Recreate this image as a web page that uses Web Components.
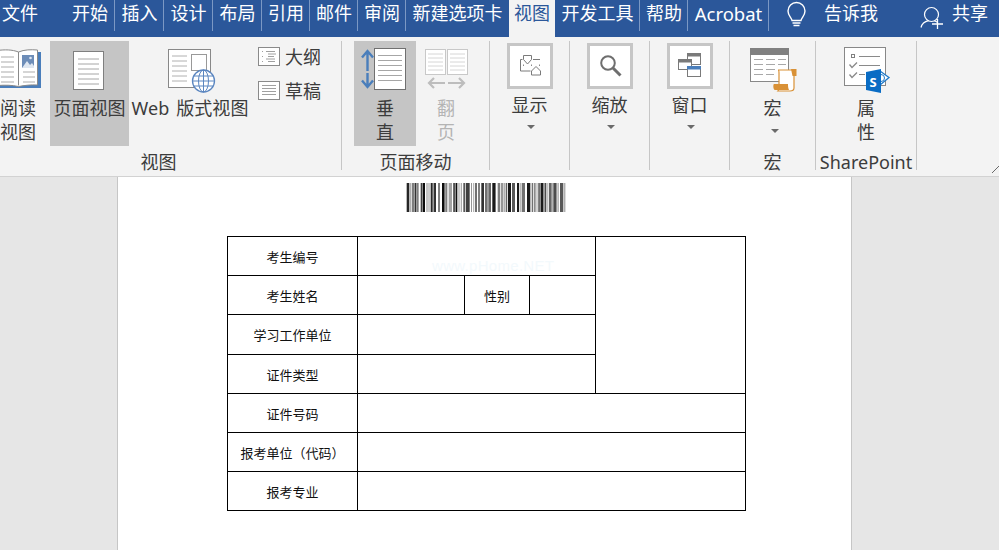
<!DOCTYPE html>
<html lang="zh"><head><meta charset="utf-8"><title>Word</title>
<style>
html,body{margin:0;padding:0;height:100%;overflow:hidden}
body{font-family:"Noto Sans","Noto Sans CJK SC",sans-serif;color:#3c3c3c}
</style></head><body>
<word-window>
  <tab-bar>
    <tab-item w="66" pad="2" plain>文件</tab-item>
    <tab-item w="49" pad="6">开始</tab-item>
    <tab-item w="49" center>插入</tab-item>
    <tab-item w="49" center>设计</tab-item>
    <tab-item w="49" center>布局</tab-item>
    <tab-item w="48" center>引用</tab-item>
    <tab-item w="48" center>邮件</tab-item>
    <tab-item w="48" center>审阅</tab-item>
    <tab-item w="103" center plain>新建选项卡</tab-item>
    <tab-item w="46" center active plain>视图</tab-item>
    <tab-item w="85" center>开发工具</tab-item>
    <tab-item w="48" center>帮助</tab-item>
    <tab-item w="81" center style="font-size:18.500px">Acrobat</tab-item>
    <svg width="55" height="37" viewBox="0 0 55 37" style="flex:none" fill="none" stroke="#fff" stroke-width="1.400"><path d="M23 20.500c-.5-3-4-5-4-9.500a8.500 8.500 0 0 1 17 0c0 4.500-3.500 6.500-4 9.500z"/><path d="M23.500 23h8M24.500 25.500h6" stroke-width="1.600"/></svg>
    <tell-me>告诉我</tell-me>
    <svg width="74" height="37" viewBox="0 0 74 37" style="flex:none" fill="none" stroke="#fff" stroke-width="1.200"><circle cx="53.500" cy="14.500" r="7"/><path d="M43 27.500c1-4 4-6 7.500-6.800M56.500 21c1 .3 2 .7 2.800 1.200"/><path d="M59.500 19v10M54 24h11" stroke-width="1.300"/></svg>
    <tell-me>共享</tell-me>
  </tab-bar>
  <ribbon-bar>
    <ribbon-group w="365" label="视图">
      <big-btn w="64" ml="10" top="7" two>
        <svg slot="icon" width="64" height="48" viewBox="-14 44 64 48" fill="none"><path d="M-2 88h43V52h-3v33h-40z" fill="#4a7ebb"/><path d="M-3 50.500c8-1 15-1 21.500 1.500 6-2.500 12.500-2.500 19-2v35c-7-.5-13 .5-19 1.500-6.500-1.500-13-1.500-21.500-1z" fill="#fff" stroke="#8a8a8a"/><path d="M18.500 52v33.500" stroke="#8a8a8a"/><path d="M1 57h13M1 62h13M1 67h13M1 72h13M1 77h13M1 82h13M23 72h12M23 77h12M23 82h12" stroke="#ababab"/><rect x="22" y="55" width="12" height="13" fill="#6d8db8"/><path d="M22 68l5-7 3 4 2-2 2 3v2z" fill="#dfe7f1"/><circle cx="30.500" cy="58" r="1.300" fill="#dfe7f1"/></svg>
        <span>阅读</span><span>视图</span>
      </big-btn>
      <big-btn w="79" top="7" on>
        <svg slot="icon" width="79" height="48" viewBox="50 44 79 48" fill="none"><rect x="73.500" y="51.500" width="30" height="38" fill="#fff" stroke="#7f7f7f"/><path d="M78 59h21M78 64h21M78 69h21M78 74h21M78 79h21M78 84h21" stroke="#a6a6a6"/></svg>
        <span>页面视图</span>
      </big-btn>
      <big-btn w="120" ml="1" top="7">
        <svg slot="icon" width="120" height="48" viewBox="130 44 120 48" fill="none"><rect x="168.500" y="49.500" width="42" height="38" fill="#fff" stroke="#888"/><path d="M172 56h15M172 61h15M172 66h15M172 71h15M172 76h15M172 81h15" stroke="#b0b0b0"/><rect x="191.500" y="54.500" width="15" height="16" fill="#fff" stroke="#999"/><circle cx="203.500" cy="81" r="11" fill="#fff" stroke="#5b86c0" stroke-width="1.300"/><ellipse cx="203.500" cy="81" rx="5" ry="11" stroke="#5b86c0"/><path d="M203.500 70v22M193.500 76h20M193.500 86h20M192.500 81h22" stroke="#5b86c0"/></svg>
        <span style="word-spacing:2px;letter-spacing:.1px">Web 版式视图</span>
      </big-btn>
      <small-col>
        <small-btn><svg slot="icon" width="22" height="19" viewBox="0 0 22 19" fill="none"><rect x=".5" y=".5" width="21" height="18" fill="#fff" stroke="#8a8a8a"/><path d="M4 4.500h1M4 9.500h1M4 14.500h1M8 4.500h9M10 7h8M10 9.500h6M8 12h9M10 14.500h7" stroke="#a0a0a0"/></svg>大纲</small-btn>
        <small-btn><svg slot="icon" width="22" height="19" viewBox="0 0 22 19" fill="none"><rect x=".5" y=".5" width="21" height="18" fill="#fff" stroke="#8a8a8a"/><path d="M4 4.500h14M4 7.500h14M4 10.500h14M4 13.500h14" stroke="#a0a0a0"/></svg>草稿</small-btn>
      </small-col>
    </ribbon-group>
    <ribbon-group w="147" label="页面移动">
      <big-btn w="62" ml="12" top="7" on two>
        <svg slot="icon" width="62" height="48" viewBox="354 44 62 48" fill="none"><path d="M362 57.500l5.500-6.500 5.500 6.500M367.500 51v20M362 80.500l5.500 6.500 5.500-6.500M367.500 87V73" stroke="#4a7ebb" stroke-width="2.400"/><rect x="374.500" y="48.500" width="31" height="41" fill="#fff" stroke="#707070"/><path d="M378 55.500h24M378 60.500h24M378 65.500h24M378 70.500h24M378 75.500h24M378 80.500h24" stroke="#a6a6a6"/></svg>
        <span>垂</span><span>直</span>
      </big-btn>
      <big-btn w="60" top="7" off two>
        <svg slot="icon" width="60" height="48" viewBox="416 44 60 48" fill="none"><rect x="425.500" y="49.500" width="20" height="25" fill="#fff" stroke="#c8c8c8"/><rect x="447.500" y="49.500" width="20" height="25" fill="#fff" stroke="#c8c8c8"/><path d="M428 54h15M428 58h15M428 62h15M428 66h15M428 70h15M450 54h15M450 58h15M450 62h15M450 66h15M450 70h15" stroke="#d6d6d6"/><path d="M434 78l-5 5 5 5M429 83h16M459 78l5 5-5 5M464 83h-16" stroke="#bdbdbd" stroke-width="2.200"/></svg>
        <span>翻</span><span>页</span>
      </big-btn>
    </ribbon-group>
    <ribbon-group w="79" center>
      <box-btn text="显示"><svg width="40" height="40" viewBox="0 0 40 40" fill="none" stroke="#7a7a7a"><path d="M10.500 13.500v11.500h10M10.500 13.500h2M23 13.500h7"/><path d="M13.500 9.500h8v4l-4 4.500-4-4.500zM21.500 25l4.500-4.500 4.500 4.500v4h-9z"/><path d="M13.500 18.500v1.500M21.500 18.500v1.500M29.500 18.500v1.500" stroke="#8a8a8a"/></svg></box-btn>
    </ribbon-group>
    <ribbon-group w="79" center>
      <box-btn text="缩放"><svg width="40" height="40" viewBox="0 0 40 40" fill="none" stroke="#6e6e6e"><circle cx="18" cy="17" r="6.800" stroke-width="2"/><path d="M23 22l7.500 7.500" stroke-width="3"/></svg></box-btn>
    </ribbon-group>
    <ribbon-group w="79" center>
      <box-btn text="窗口"><svg width="40" height="40" viewBox="0 0 40 40" fill="none" stroke="#7a7a7a"><rect x="17.500" y="7.500" width="13" height="11" fill="#fff"/><rect x="17" y="7" width="14" height="3.500" fill="#7a7a7a" stroke="none"/><rect x="8.500" y="13.500" width="13" height="10" fill="#fff"/><rect x="8" y="13" width="14" height="3.500" fill="#7a7a7a" stroke="none"/><rect x="17.500" y="20.500" width="13" height="10" fill="#fff"/><rect x="17" y="20" width="14" height="3.500" fill="#4a7ebb" stroke="none"/></svg></box-btn>
    </ribbon-group>
    <ribbon-group w="85" label="宏" center>
      <big-btn w="85" top="7" two caret>
        <svg slot="icon" width="85" height="48" viewBox="730 44 85 48" fill="none"><rect x="750.500" y="48.500" width="38" height="33" fill="#fff" stroke="#888"/><rect x="750" y="48" width="39" height="7" fill="#808080"/><path d="M754 59.500h9M766 59.500h9M778 59.500h8M754 64.500h9M766 64.500h9M778 64.500h8M754 69.500h9M766 69.500h9M754 74.500h9M766 74.500h8" stroke="#a8a8a8"/><path d="M778 70h15c2 1 2 4 1 6v12c0 2-2 3-4 3h-12c1-1 1-3 1-5V73c0-2 0-3-1-3z" fill="#fff" stroke="#d99136" stroke-width="1.200"/><path d="M791 69h5.500v7h-4zM774 84h14c0 2 0 4 1 6h-14c-2 0-2-6-1-6z" fill="#d99136"/></svg>
        <span>宏</span>
      </big-btn>
    </ribbon-group>
    <ribbon-group w="100" label="SharePoint" center>
      <big-btn w="100" top="7" two>
        <svg slot="icon" width="100" height="48" viewBox="816 44 100 48" fill="none"><rect x="844.500" y="47.500" width="41" height="38" fill="#fff" stroke="#888"/><rect x="851.500" y="54.500" width="3" height="3" stroke="#808080"/><path d="M859 56.500h21M859 65.500h21M859 74.500h6" stroke="#8a8a8a"/><path d="M849.500 64.500l2.500 3 5-5M849.500 74.500l2.500 3 5-5" stroke="#8a8a8a" stroke-width="1.300"/><path d="M880 71l9 6.500-9 7.500" fill="#fff" stroke="#1e78c8" stroke-width="1.300"/><circle cx="881" cy="78" r="3.500" stroke="#1e78c8"/><path d="M866 72l15-3v24l-15-3z" fill="#0a6cc4"/><text x="869.500" y="86.500" font-family="Noto Sans,sans-serif" font-weight="700" font-size="13" fill="#fff">S</text></svg>
        <span>属</span><span>性</span>
      </big-btn>
    </ribbon-group>
    <launch-corner></launch-corner>
  </ribbon-bar>
  <doc-area>
    <doc-page>
      <bar-code></bar-code>
      <exam-form></exam-form>
    </doc-page>
  </doc-area>
</word-window>
<script>
const CJK='"Noto Sans","Noto Sans CJK SC",sans-serif';
function def(name,css,html,init){
  customElements.define(name,class extends HTMLElement{
    constructor(){super();const r=this.attachShadow({mode:'open'});r.innerHTML='<style>'+css+'</style>'+(html||'<slot></slot>');}
    connectedCallback(){if(init)init(this,this.shadowRoot);}
  });
}
def('word-window',`:host{display:flex;flex-direction:column;width:999px;height:550px;overflow:hidden;font-family:${CJK}}`);
def('tab-bar',`:host{display:flex;flex:none;height:37px;background:#2b579a;color:#fff;font-size:18px}`);
def('tab-item',`:host{display:block;flex:none;box-sizing:border-box;height:37px;line-height:27px;white-space:nowrap;position:relative}
  :host([center]){text-align:center}
  :host([active]){background:#f3f3f3;color:#2b579a}
  i{position:absolute;right:0;top:0;width:1px;height:31px;background:#7b98c4}
  :host([plain]) i{display:none}`,
  '<slot></slot><i></i>',(e)=>{e.style.width=e.getAttribute('w')+'px';
    if(e.hasAttribute('pad'))e.style.paddingLeft=e.getAttribute('pad')+'px';});
def('tell-me',`:host{display:block;flex:none;line-height:27px;white-space:nowrap}`);
def('ribbon-bar',`:host{display:flex;flex:none;box-sizing:border-box;height:140px;margin-left:-24px;width:1023px;padding-top:4px;background:#f3f3f3;border-bottom:1px solid #d2d2d2;color:#3c3c3c;font-size:18px}`);
def('ribbon-group',`:host{display:flex;flex:none;height:135px}
  .c{flex:1;min-width:0;display:flex;flex-direction:column}
  .r{display:flex;height:105px;flex:none}
  :host([center]) .r{justify-content:center}
  .l{height:26px;margin-top:3px;line-height:26px;text-align:center;white-space:nowrap}
  i{flex:none;width:1px;height:129px;background:#c6c6c6}`,
  '<div class="c"><div class="r"><slot></slot></div><div class="l"></div></div><i></i>',
  (e,r)=>{e.style.width=(+e.getAttribute('w')+1)+'px';r.querySelector('.l').textContent=e.getAttribute('label')||'';});
def('big-btn',`:host{display:flex;flex-direction:column;align-items:center;flex:none;box-sizing:border-box;height:105px}
  :host([on]){background:#c5c5c5}
  :host([off]){color:#b4b4b4}
  .i{height:52px;padding-top:3px;flex:none;align-self:stretch;display:flex}
  ::slotted(span){display:block;line-height:24px;height:24px;white-space:nowrap}
  ::slotted(svg){display:block;overflow:visible}
  .c{display:none;width:0;height:0;border:4px solid transparent;border-top:4px solid #6a6a6a;border-bottom:0;margin:9px 0 0 5px}
  :host([caret]) .c{display:block}`,
  '<div class="i"><slot name="icon"></slot></div><slot></slot><b class="c"></b>',
  (e)=>{e.style.width=e.getAttribute('w')+'px';e.style.marginLeft=(e.getAttribute('ml')||0)+'px';});
def('small-col',`:host{display:flex;flex-direction:column;margin-left:8px;flex:none}`);
def('small-btn',`:host{display:flex;align-items:center;box-sizing:border-box;height:34px;padding-bottom:4px;white-space:nowrap}
  ::slotted(svg){display:block;margin:0 5px 0 0}`,'<slot name="icon"></slot><slot></slot>');
def('box-btn',`:host{display:flex;flex-direction:column;align-items:center;flex:none;padding-top:2px}
  .b{box-sizing:border-box;width:46px;height:46px;background:#fff;border:3px solid #c6c6c6;display:flex}
  .t{margin-top:4px;line-height:24px;height:24px}
  .c{width:0;height:0;border:4px solid transparent;border-top:4px solid #6a6a6a;border-bottom:0;margin:8px 0 0 3px}`,
  '<div class="b"><slot></slot></div><div class="t"></div><b class="c"></b>',
  (e,r)=>{r.querySelector('.t').textContent=e.getAttribute('text');});
def('launch-corner',`:host{display:block;flex:1;position:relative}
  svg{position:absolute;right:0;top:125px}`,
  '<svg width="7" height="8" viewBox="0 0 7 8" fill="none" stroke="#6a6a6a"><path d="M0 7L7 0"/></svg>');
def('doc-area',`:host{display:block;flex:1;min-height:0;background:#e6e6e6;padding-left:117px;overflow:hidden}`);
def('doc-page',`:host{display:block;box-sizing:border-box;width:735px;height:373px;padding-top:6px;background:#fff;border-left:1px solid #c6c6c6;border-right:1px solid #c6c6c6}`);
def('bar-code',`:host{display:block;width:160px;height:29px;margin:0 0 0 288px}
  svg{display:block}`,
  '<svg width="160" height="29" viewBox="0 0 160 29"><defs><filter id="f" x="-2%" width="104%" y="-5%" height="110%"><feGaussianBlur stdDeviation=".55 .5"/></filter></defs><g id="g" filter="url(#f)" fill="#111"></g></svg>',
  (e,r)=>{
    const bars=[[.7,2.6,.9],[4.300,1,.45],[6,2,.55],[8.5,2,.85],[11,1.600,.55],[14.7,1.300,.8],[16.500,2.500,1],[20.500,1,.45],[22.500,1,.4],[24.7,2,.9],[27.500,2.500,.85],[32,2,.55],[36,2.600,1],[39.300,2,.55],[42.700,3.300,.4],[47.300,1.500,.9],[49.500,1.800,1],[52.500,1,.4],[54.800,1,.45],[57.300,2,.7],[60,3.700,.8],[65,1,.45],[67.200,1,.35],[69,2,.6],[72,2,.55],[75.300,2.700,.85],[79,2.700,.6],[82.300,2.700,.65],[86.300,3.300,.95],[91.700,2.500,.55],[95,2.400,.45],[98,1,.35],[99.700,1.500,.65],[102,3,.95],[106,3,.7],[111,2,.95],[113.700,1,.4],[115.700,3.300,.6],[121,3.300,.95],[125.700,1.500,.6],[128,1.700,.5],[130.500,1,.35],[132.300,1.500,.75],[134.500,3,.95],[138.500,1.800,.75],[141.300,1,.35],[143,2.700,.65],[146,1,.3],[147.300,3.300,.75],[151.500,1.200,.4],[154,3.300,.7],[158.300,1,.45]];
    r.querySelector('#g').innerHTML=bars.map(b=>`<rect x="${b[0]}" y="0" width="${b[1]}" height="29" opacity="${b[2]}"/>`).join('');
  });
def('exam-form',`:host{display:block;position:relative;width:519px;margin:24px 0 0 109px;font-size:13px;color:#111}
  table{border-collapse:collapse;table-layout:fixed;width:519px}
  td{border:1px solid #000;padding:1px 0 0;text-align:center;vertical-align:middle;line-height:16px;background:transparent}
  .w{position:absolute;left:205px;top:20px;font-size:15px;line-height:20px;color:#f3f9fc;letter-spacing:.3px;white-space:nowrap;font-family:"Liberation Sans",sans-serif}`,
  `<table><colgroup><col style="width:130px"><col style="width:107px"><col style="width:65px"><col style="width:66px"><col style="width:150px"></colgroup>
  <tr style="height:39px"><td>考生编号</td><td colspan="3"></td><td rowspan="4"></td></tr>
  <tr style="height:39px"><td>考生姓名</td><td></td><td>性别</td><td></td></tr>
  <tr style="height:40px"><td>学习工作单位</td><td colspan="3"></td></tr>
  <tr style="height:39px"><td>证件类型</td><td colspan="3"></td></tr>
  <tr style="height:39px"><td>证件号码</td><td colspan="4"></td></tr>
  <tr style="height:39px"><td>报考单位（代码）</td><td colspan="4"></td></tr>
  <tr style="height:39px"><td>报考专业</td><td colspan="4"></td></tr></table><div class="w">www.pHome.NET</div>`);
</script>
</body></html>
